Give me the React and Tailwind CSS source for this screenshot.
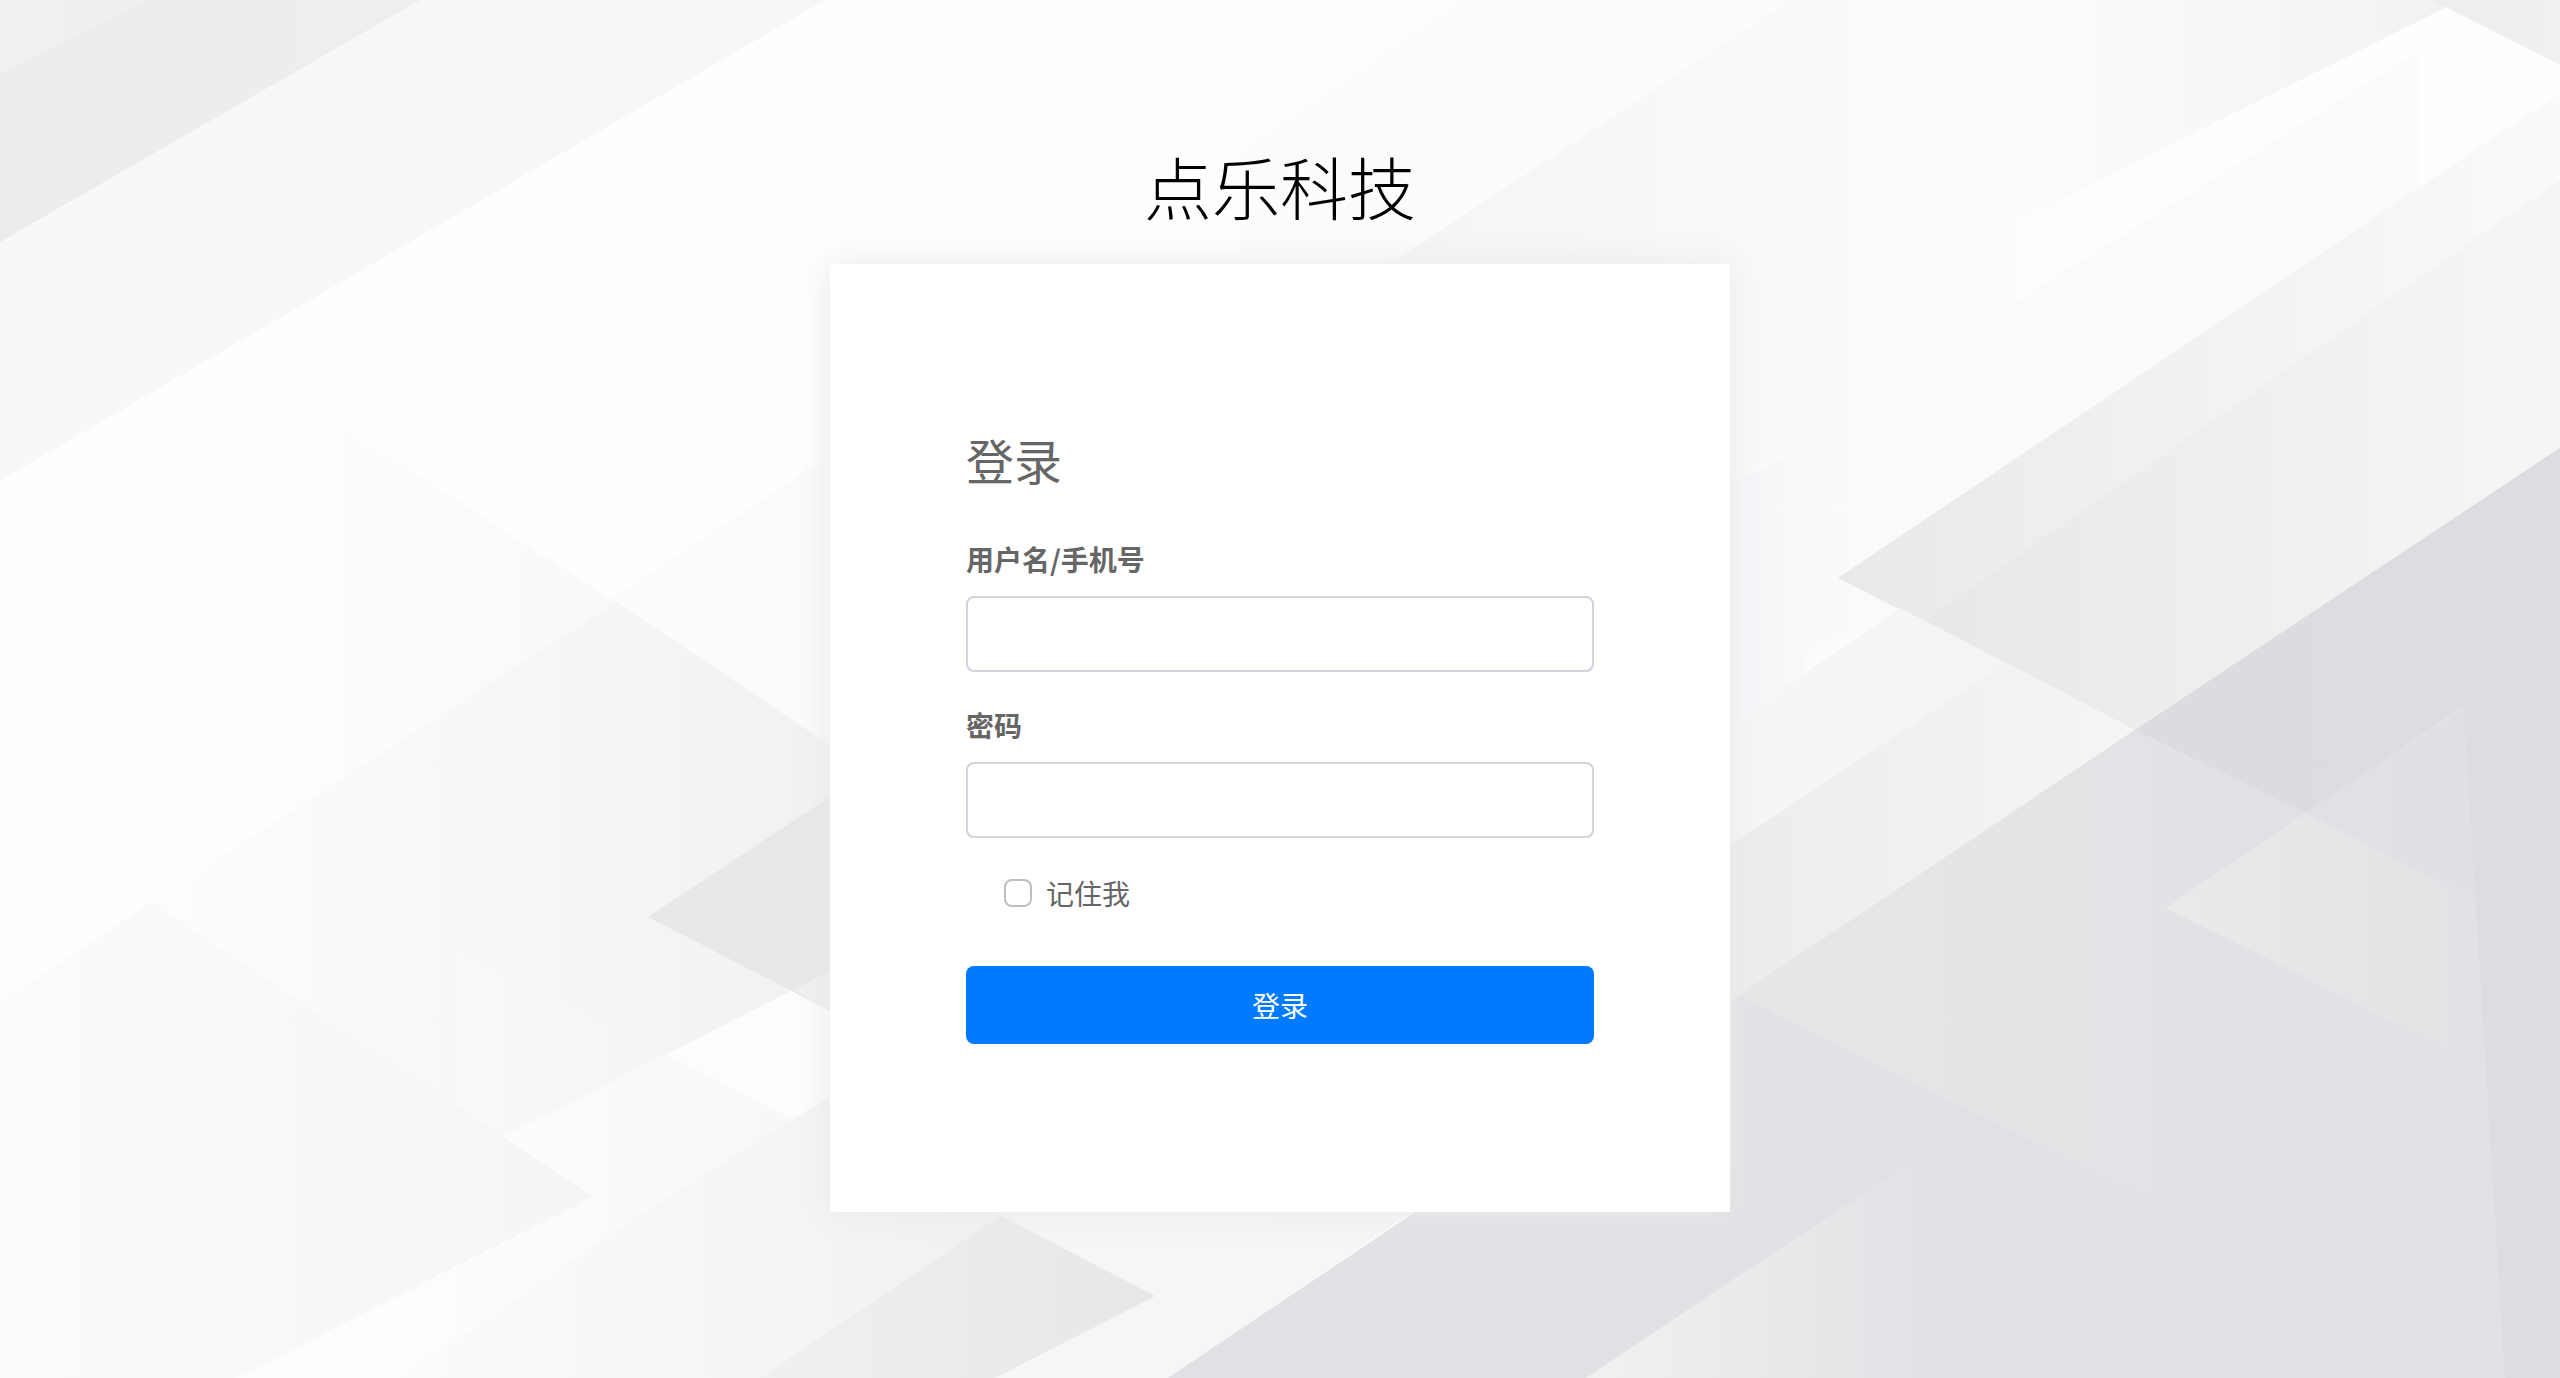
/**
 * Login page: company title, white card with the login form,
 * and a pale geometric backdrop that covers the whole window.
 */
import { useState } from 'react'

// Painted back to front. Each facet fades horizontally from x1 to x2.
const FACETS = [
    // top left bands
    { points: '0,0 825,0 0,481',                 x1: 0,    x2: 825,  from: '#f8f8f8', to: '#f7f7f7' },
    { points: '0,0 420,0 0,242',                 x1: 0,    x2: 420,  from: '#ececec', to: '#eeeeee' },
    { points: '0,0 150,0 0,75',                  x1: 0,    x2: 150,  from: '#f0f0f0', to: '#efefef' },
    // left side
    { points: '0,1003 840,448 840,1378 0,1378',  x1: 0,    x2: 840,  from: '#fbfcfc', to: '#f9fcfb' },
    { points: '285,390 616,602 480,689 285,818', x1: 285,  x2: 616,  from: '#fdfdfd', to: '#f9f9f9' },
    { points: '616,602 840,752 840,1378 151,1378 151,902', x1: 151, x2: 840, from: '#fcfdfd', to: '#f0f1f1' },
    { points: '455,950 840,1140 840,1300 455,1300', x1: 455, x2: 700, from: '#f8f9f9', to: '#f3f4f4' },
    { points: '793,990 840,966 840,1378 235,1378 370,1205', x1: 370, x2: 840, from: '#fafbfb', to: '#fcfdfd' },
    { points: '665,1054 840,1143 840,1378 235,1378 503,1137', x1: 400, x2: 840, from: '#fcfdfd', to: '#f6f7f7' },
    { points: '0,801 151,902 593,1197 235,1378 0,1378', x1: 0, x2: 593, from: '#fbfbfb', to: '#f4f5f5' },
    { points: '0,801 151,902 0,1003',            x1: 0,    x2: 151,  from: '#fdfdfd', to: '#fefefe' },
    { points: '648,917 840,790 840,1016',        x1: 648,  x2: 840,  from: '#e8e8e8', to: '#e7e7e7' },
    { points: '793,990 840,966 840,1016',        x1: 793,  x2: 840,  from: '#eeefef', to: '#eeefef' },
    // bottom middle
    { points: '400,1378 640,1215 840,1090 1420,1200 1172,1378', x1: 400, x2: 1000, from: '#fbfbfb', to: '#f0f1f1' },
    { points: '985,1206 1420,1206 1172,1378 995,1378 1155,1296', x1: 985, x2: 1420, from: '#f5f7f6', to: '#f5f6f6' },
    { points: '760,1378 1000,1216 1155,1296 995,1378', x1: 760, x2: 1155, from: '#f0f0f0', to: '#e7e7e7' },
    // top right
    { points: '1460,0 2560,0 2560,448 2135,730 1730,1002 1240,264 1240,150', x1: 1240, x2: 2450, from: '#fbfcfc', to: '#fbfbfb' },
    { points: '1790,0 2560,0 2560,300 1730,520 1390,264', x1: 1390, x2: 2015, from: '#f4f5f5', to: '#fcfcfc' },
    { points: '2015,0 2450,0 2445,8 2015,222',   x1: 2015, x2: 2450, from: '#fcfcfc', to: '#f1f2f1' },
    { points: '2432,0 2560,0 2560,65',           x1: 2432, x2: 2560, from: '#ededed', to: '#f0f0f0' },
    { points: '2445,8 2560,65 2560,300 2015,500 2015,222', x1: 2015, x2: 2560, from: '#fcfdfd', to: '#fefefe' },
    { points: '2420,50 2420,300 1730,700 1730,480', x1: 1730, x2: 2420, from: '#f9fafa', to: '#fafbfb' },
    { points: '1730,482 1805,450 1805,700 1730,725', x1: 1730, x2: 1805, from: '#f4f6f9', to: '#f7f9fa' },
    { points: '1838,578 2560,93 2560,448 2135,730', x1: 1838, x2: 2560, from: '#e9e9e9', to: '#fafafa' },
    { points: '1925,620 2560,180 2560,448 2135,730', x1: 1925, x2: 2520, from: '#e7e8e8', to: '#f5f5f5' },
    // right of the card
    { points: '1730,725 1900,608 2135,730 1730,1002', x1: 1730, x2: 2000, from: '#f5f7f7', to: '#f4f4f4' },
    { points: '1730,845 2007,663 2135,730 1730,1002', x1: 1730, x2: 2135, from: '#ececec', to: '#f4f5f5' },
    // blue grey slab
    { points: '2560,448 2560,1378 1168,1378 1412,1214 1728,1003 2135,730', x1: 1172, x2: 2560, from: '#e0e1e5', to: '#e1e2e5' },
    { points: '1740,996 2135,730 2232,777 2232,1240', x1: 1740, x2: 2232, from: '#e6e7e7', to: '#e1e2e5' },
    { points: '2135,730 2560,448 2560,640 2306,813', x1: 2135, x2: 2560, from: '#dbdcdf', to: '#dbdde0' },
    { points: '2306,813 2495,689 2560,650 2560,940', x1: 2306, x2: 2560, from: '#e0e1e4', to: '#dfe0e3' },
    { points: '2166,908 2306,813 2560,945 2560,1105', x1: 2166, x2: 2560, from: '#e9eaea', to: '#e0e0e4' },
    { points: '2452,520 2560,448 2560,1378 2505,1378', x1: 2460, x2: 2560, from: '#dcdde0', to: '#dcdde1' },
    { points: '1586,1378 1720,1288 1930,1150 1930,1378', x1: 1586, x2: 1930, from: '#f1f1f1', to: '#e1e2e5' },
]

function Backdrop() {
    return (
        <svg
            className="absolute inset-0 -z-10 h-full w-full"
            viewBox="0 0 2560 1378"
            preserveAspectRatio="xMidYMid slice"
            aria-hidden="true"
        >
            <defs>
                {FACETS.map((f, i) => (
                    <linearGradient
                        key={i}
                        id={`facet-${i}`}
                        gradientUnits="userSpaceOnUse"
                        x1={f.x1}
                        x2={f.x2}
                        y1="0"
                        y2="0"
                    >
                        <stop offset="0" stopColor={f.from} />
                        <stop offset="1" stopColor={f.to} />
                    </linearGradient>
                ))}
            </defs>
            <rect width="2560" height="1378" fill="#fefefe" />
            {FACETS.map((f, i) => (
                <polygon key={i} points={f.points} fill={`url(#facet-${i})`} />
            ))}
        </svg>
    )
}

function Field({ id, label, type, value, onChange }) {
    return (
        <div className="mb-8 flex flex-col gap-4">
            <label htmlFor={id} className="font-bold leading-[42px]">
                {label}
            </label>
            <input
                id={id}
                name={id}
                type={type}
                value={value}
                onChange={(e) => onChange(e.target.value)}
                className="h-[76px] w-full rounded-lg border-2 border-[#ced4da] bg-white px-5 outline-none focus:border-[#80bdff]"
            />
        </div>
    )
}

export default function App() {
    const [username, setUsername] = useState('')
    const [password, setPassword] = useState('')
    const [remember, setRemember] = useState(false)

    return (
        <main className="relative isolate min-h-screen overflow-hidden px-4 pt-[136px] pb-16 font-['Noto_Sans_CJK_SC',sans-serif] text-[28px] text-[#666]">
            <Backdrop />

            <h1 className="mb-7 text-center text-[68px] leading-[100px] font-light text-black">
                点乐科技
            </h1>

            <div className="mx-auto w-full max-w-[900px] bg-white px-[136px] pt-[166px] pb-[168px] shadow-[0_0_36px_#e9e9e9]">
                <form onSubmit={(e) => e.preventDefault()}>
                    <h2 className="mb-[50px] text-[48px] leading-[58px]">登录</h2>

                    <Field id="username" label="用户名/手机号" type="text" value={username} onChange={setUsername} />
                    <Field id="password" label="密码" type="password" value={password} onChange={setPassword} />

                    <div className="flex items-center gap-[14px] pt-[2px] pl-[38px]">
                        <input
                            id="remember"
                            type="checkbox"
                            checked={remember}
                            onChange={(e) => setRemember(e.target.checked)}
                            className="size-7 appearance-none rounded-lg border-2 border-[#bfbfbf] bg-white checked:border-[#007bff] checked:bg-[#007bff]"
                        />
                        <label htmlFor="remember" className="leading-[42px]">
                            记住我
                        </label>
                    </div>

                    <button
                        type="submit"
                        className="mt-[52px] h-[78px] w-full rounded-lg bg-[#007bff] text-white hover:bg-[#0069d9]"
                    >
                        登录
                    </button>
                </form>
            </div>
        </main>
    )
}
